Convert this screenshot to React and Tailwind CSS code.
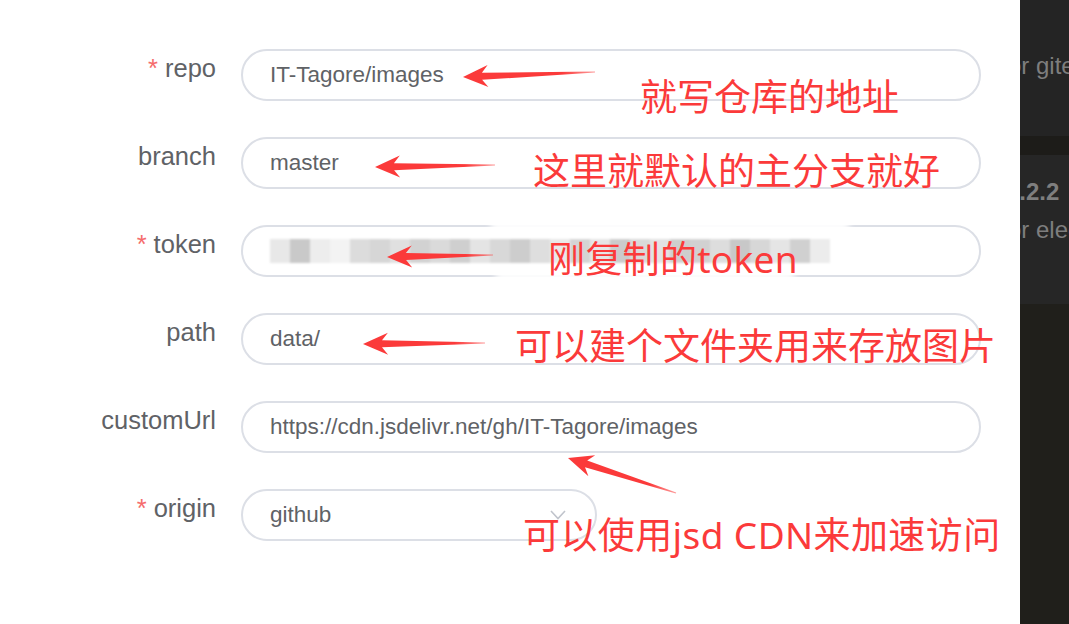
import React from "react";

const rows = [
  { label: "repo", req: true, value: "IT-Tagore/images" },
  { label: "branch", req: false, value: "master" },
  { label: "token", req: true, value: "", token: true },
  { label: "path", req: false, value: "data/" },
  { label: "customUrl", req: false, value: "https://cdn.jsdelivr.net/gh/IT-Tagore/images" },
];

const arrows = [
  { tip: [463, 77], tail: [595, 72] },
  { tip: [375, 167], tail: [495, 165] },
  { tip: [387, 257], tail: [493, 255] },
  { tip: [363, 344], tail: [485, 343] },
  { tip: [568, 458], tail: [676, 493] },
];

function arrowPoints(tip, tail) {
  const [hx, hy] = tip;
  const [tx, ty] = tail;
  const dx = tx - hx;
  const dy = ty - hy;
  const len = Math.hypot(dx, dy);
  const ux = dx / len;
  const uy = dy / len;
  const nx = -uy;
  const ny = ux;
  const headLen = 25;
  const headHalf = 11;
  const join = 19;
  const shaftHead = 7;
  const shaftTail = 1.2;
  const p = (x, y) => `${x.toFixed(1)},${y.toFixed(1)}`;
  return [
    p(hx, hy),
    p(hx + ux * headLen + nx * headHalf, hy + uy * headLen + ny * headHalf),
    p(hx + ux * join + nx * shaftHead / 2, hy + uy * join + ny * shaftHead / 2),
    p(tx + nx * shaftTail / 2, ty + ny * shaftTail / 2),
    p(tx - nx * shaftTail / 2, ty - ny * shaftTail / 2),
    p(hx + ux * join - nx * shaftHead / 2, hy + uy * join - ny * shaftHead / 2),
    p(hx + ux * headLen - nx * headHalf, hy + uy * headLen - ny * headHalf),
  ].join(" ");
}

const notes = [
  { text: "就写仓库的地址", left: 640, top: 78, ls: 0 },
  { text: "这里就默认的主分支就好", left: 533, top: 152, ls: 0 },
  { text: "刚复制的token", left: 548, top: 240, ls: 0.3 },
  { text: "可以建个文件夹用来存放图片", left: 515, top: 327, ls: 0 },
  { text: "可以使用jsd CDN来加速访问", left: 523, top: 516, ls: 0.4 },
];

const blurShades = [
  "#e8e8e8", "#c9c9c9", "#ededed", "#f3f3f3", "#dcdcdc", "#d6d6d6", "#e0e0e0", "#d2d2d2",
  "#dadada", "#cfcfcf", "#e4e4e4", "#d8d8d8", "#cdcdcd", "#dedede", "#e9e9e9", "#d4d4d4",
  "#e6e6e6", "#cbcbcb", "#d9d9d9", "#e2e2e2", "#cecece", "#d1d1d1", "#dddddd", "#c8c8c8",
  "#d7d7d7", "#e5e5e5", "#d0d0d0", "#ececec",
];

function Label({ req, children }) {
  return (
    <div className="w-[216px] shrink-0 pt-[4px] text-right text-[25.5px] leading-[30px] text-[#606266]">
      {req && <span className="mr-[7px] text-[#f56c6c]">*</span>}
      {children}
    </div>
  );
}

export default function App() {
  return (
    <div
      className="relative flex h-[624px] w-[1069px] overflow-hidden bg-white"
      style={{ fontFamily: '"Liberation Sans", Arial, sans-serif' }}
    >
      <main className="relative w-[1020px] shrink-0 pt-[49px]">
        {rows.map((r) => (
          <div key={r.label} className="mb-[36px] flex h-[52px] items-start">
            <Label req={r.req}>{r.label}</Label>
            <div className="ml-[25px] flex h-[52px] w-[740px] items-center overflow-hidden rounded-full border-2 border-[#dcdfe6] pl-[27px] text-[22.5px] text-[#606266]">
              {r.token ? (
                <div className="flex h-[24px] blur-[1px]">
                  {blurShades.map((c, i) => (
                    <div key={i} className="h-full w-[20px]" style={{ background: c }} />
                  ))}
                </div>
              ) : (
                r.value
              )}
            </div>
          </div>
        ))}
        <div className="flex h-[52px] items-start">
          <Label req>origin</Label>
          <div className="ml-[25px] flex h-[52px] w-[356px] items-center justify-between rounded-full border-2 border-[#dcdfe6] pl-[27px] pr-[28px] text-[22.5px] text-[#606266]">
            <span>github</span>
            <svg width="18" height="12" viewBox="0 0 18 12" fill="none">
              <path d="M2 2 L9 9.5 L16 2" stroke="#c0c4cc" strokeWidth="1.6" />
            </svg>
          </div>
        </div>

        {/* white smear over token field */}
        <div className="absolute left-[490px] top-[214px] h-[20px] w-[360px] rounded-full bg-white/90 blur-[3px]" />
        <div className="absolute left-[495px] top-[268px] h-[14px] w-[300px] rounded-full bg-white/90 blur-[3px]" />
      </main>

      <aside className="flex w-[49px] shrink-0 flex-col overflow-hidden text-[24px] text-[#7e7e7e]">
        <div className="flex h-[136px] items-start bg-[#242424] pt-[48px]">
          <span className="-ml-[12px] whitespace-nowrap">or gitee</span>
        </div>
        <div className="h-[19px] bg-[#1d1c19]" />
        <div className="flex h-[149px] flex-col bg-[#262626] pt-[22px]">
          <span className="-ml-[14px] whitespace-nowrap font-bold leading-[30px]">1.2.2</span>
          <span className="-ml-[12px] mt-[8px] whitespace-nowrap leading-[30px]">or electron</span>
        </div>
        <div className="flex-1 bg-[#201f1b]" />
      </aside>

      <svg className="pointer-events-none absolute left-0 top-0" width="1069" height="624">
        {arrows.map((a, i) => (
          <g key={i}>
            <defs>
              <linearGradient
                id={`ag${i}`}
                gradientUnits="userSpaceOnUse"
                x1={a.tip[0]}
                y1={a.tip[1]}
                x2={a.tail[0]}
                y2={a.tail[1]}
              >
                <stop offset="0" stopColor="#fb3a3a" />
                <stop offset="0.75" stopColor="#fb3a3a" />
                <stop offset="1" stopColor="#fb3a3a" stopOpacity="0.5" />
              </linearGradient>
            </defs>
            <polygon points={arrowPoints(a.tip, a.tail)} fill={`url(#ag${i})`} />
          </g>
        ))}
      </svg>

      {notes.map((n) => (
        <div
          key={n.text}
          className="pointer-events-none absolute whitespace-nowrap text-[37px] leading-[37px] text-[#fb3a3a]"
          style={{
            left: n.left,
            top: n.top,
            letterSpacing: n.ls,
            fontFamily: '"Noto Sans", "Noto Sans CJK SC", sans-serif',
          }}
        >
          {n.text}
        </div>
      ))}
    </div>
  );
}
